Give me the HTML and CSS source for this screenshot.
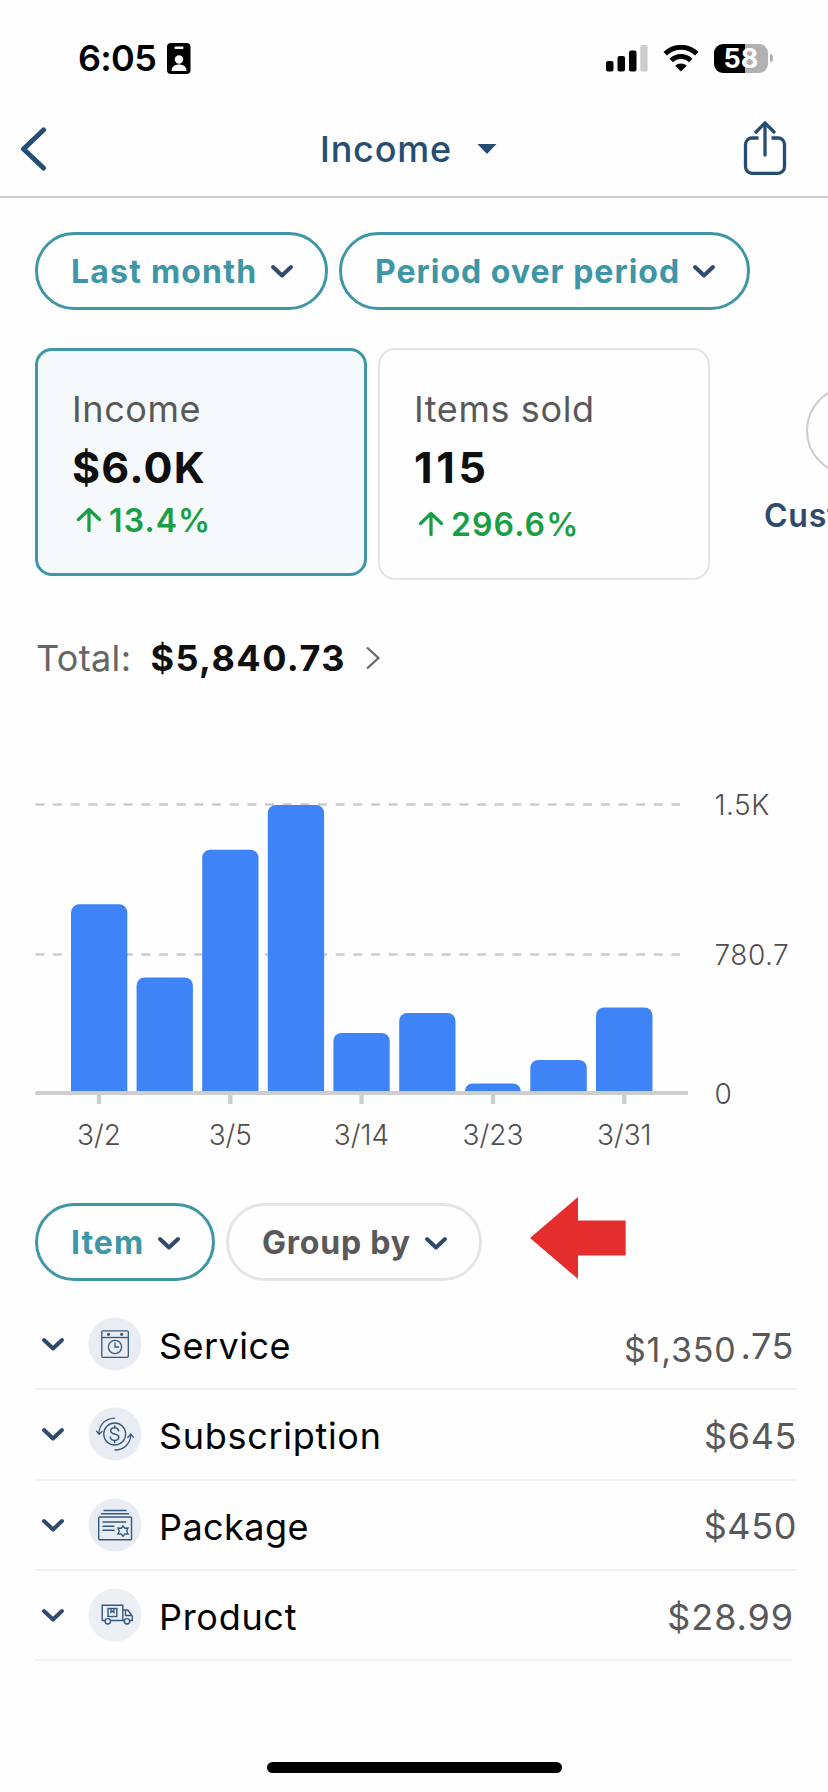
FILE: index.html
```html
<!DOCTYPE html>
<html lang="en">
<head>
<meta charset="utf-8">
<title>Income</title>
<link rel="stylesheet" href="styles.css">
</head>
<body>
<svg class="defs" width="0" height="0" aria-hidden="true">
  <symbol id="chevron" viewBox="0 0 24 16"><path d="M3 4l9 8.500l9-8.500" fill="none" stroke="#2f4a6d" stroke-width="4" stroke-linecap="round" stroke-linejoin="round"/></symbol>
  <symbol id="up" viewBox="0 0 26 26"><path d="M13 23.500V3M2.500 12.500L13 2.500L23.500 12.500" fill="none" stroke="#1a9e45" stroke-width="3.300" stroke-linecap="round" stroke-linejoin="round"/></symbol>
</svg>
<div class="screen">
  <div class="status">
    <span class="time">6:05</span>
    <svg class="badge" width="24" height="31" viewBox="0 0 24 31"><rect width="23.500" height="31" rx="4" fill="#000"/><rect x="7.500" y="3.500" width="9" height="2.600" rx="1" fill="#fff"/><circle cx="12" cy="16.500" r="4.200" fill="#fff"/><path d="M4.500 28c0-4.500 3.500-6.500 7.500-6.500s7.500 2 7.500 6.500z" fill="#fff"/></svg>
    <svg class="signal" width="42" height="27" viewBox="0 0 42 27"><rect x="0" y="16" width="7.500" height="10.500" rx="2"/><rect x="11.500" y="11" width="7.500" height="15.500" rx="2"/><rect x="23" y="5.500" width="7.500" height="21" rx="2"/><rect x="34.300" y="0" width="7.300" height="26.500" rx="2" fill="#ccc"/></svg>
    <svg class="wifi" width="36" height="27" viewBox="0 0 36 27"><g fill="none" stroke="#000" stroke-width="5"><path d="M2.200 8.800a22.500 22.500 0 0 1 31.600 0"/><path d="M8.300 15.500a14 14 0 0 1 19.400 0"/></g><path d="M18 26.500l-5.800-5.700a8.200 8.200 0 0 1 11.600 0z"/></svg>
    <div class="battery"><span>58</span></div><i class="nub"></i>
  </div>

  <header class="bar">
    <svg width="28" height="44" viewBox="0 0 28 44"><path d="M24.500 3L4.500 22L24.500 41" fill="none" stroke="#264e73" stroke-width="5" stroke-linecap="round" stroke-linejoin="round"/></svg>
    <div class="title">Income <svg width="20" height="10" viewBox="0 0 20 10"><path d="M.5 0h19L10 10z" fill="#264e73"/></svg></div>
    <svg class="share" width="44" height="56" viewBox="0 0 44 56"><g fill="none" stroke="#264e73" stroke-width="3.300" stroke-linecap="round" stroke-linejoin="round"><path d="M15.500 18H9a6.500 6.500 0 0 0-6.500 6.500v22.300a6.500 6.500 0 0 0 6.500 6.500h26a6.500 6.500 0 0 0 6.500-6.500V24.500A6.500 6.500 0 0 0 35 18h-6.500" stroke-linecap="butt"/><path d="M22 35V3M13 12l9-9.200l9 9.200"/></g></svg>
  </header>

  <div class="pills">
    <div class="pill month">Last month <svg width="24" height="16"><use href="#chevron"/></svg></div>
    <div class="pill period">Period over period <svg width="24" height="16"><use href="#chevron"/></svg></div>
  </div>

  <div class="cards">
    <div class="card active">
      <div class="label">Income</div>
      <div class="value">$6.0K</div>
      <div class="delta"><svg width="26" height="26"><use href="#up"/></svg>13.4%</div>
    </div>
    <div class="card">
      <div class="label">Items sold</div>
      <div class="value num">115</div>
      <div class="delta wide"><svg width="26" height="26"><use href="#up"/></svg>296.6%</div>
    </div>
    <div class="custom"><i></i><span>Customize</span></div>
  </div>

  <div class="total"><span>Total:</span><b>$5,840.73</b><svg width="16" height="24" viewBox="0 0 16 24"><path d="M2 1.500L13.500 12L2 22.500" fill="none" stroke="#666" stroke-width="2.200"/></svg></div>

  <svg class="chart" width="828" height="380" viewBox="0 780 828 380">
    <path d="M35.300 804.500H680M35.300 954.500H680" stroke="#ccc" stroke-width="2.400" stroke-dasharray="9 8.670" fill="none"/>
    <g fill="#3e84f7">
      <path d="M71 1092V912.300a8 8 0 0 1 8-8h40.300a8 8 0 0 1 8 8V1092z"/>
      <path d="M136.600 1092V985.500a8 8 0 0 1 8-8h40.300a8 8 0 0 1 8 8V1092z"/>
      <path d="M202.200 1092V857.700a8 8 0 0 1 8-8h40.300a8 8 0 0 1 8 8V1092z"/>
      <path d="M267.800 1092V813a8 8 0 0 1 8-8h40.300a8 8 0 0 1 8 8V1092z"/>
      <path d="M333.400 1092V1041a8 8 0 0 1 8-8h40.300a8 8 0 0 1 8 8V1092z"/>
      <path d="M399.200 1092V1021a8 8 0 0 1 8-8h40.300a8 8 0 0 1 8 8V1092z"/>
      <path d="M465 1092c0-5 3-8.400 8-8.400h39.500c5 0 8.300 3.400 8.300 8.400z"/>
      <path d="M530.300 1092V1068a8 8 0 0 1 8-8h40.500a8 8 0 0 1 8 8V1092z"/>
      <path d="M596 1092V1015.500a8 8 0 0 1 8-8h40.500a8 8 0 0 1 8 8V1092z"/>
    </g>
    <path d="M35.300 1093H688" stroke="#cecece" stroke-width="4"/>
    <path d="M99 1093v11M230.300 1093v11M361.500 1093v11M493 1093v11M624.300 1093v11" stroke="#cecece" stroke-width="4.400"/>
    <g class="axis" text-anchor="middle">
      <text x="99" y="1145">3/2</text><text x="230.300" y="1145">3/5</text><text x="361.500" y="1145">3/14</text><text x="493" y="1145">3/23</text><text x="624.300" y="1145">3/31</text>
    </g>
    <g class="axis scale"><text x="714.500" y="815">1.5K</text><text x="714.500" y="965">780.7</text><text x="714.500" y="1104">0</text></g>
  </svg>

  <div class="pills group">
    <div class="pill item">Item <svg width="24" height="16"><use href="#chevron"/></svg></div>
    <div class="pill grey">Group by <svg width="24" height="16"><use href="#chevron"/></svg></div>
    <svg class="pointer" width="96" height="82" viewBox="0 0 96 82"><path d="M0 41L48 0v23.500h47.700V58.500H48V82z" fill="#e42e2e"/></svg>
  </div>

  <div class="rows">
    <div class="row">
      <svg width="24" height="16"><use href="#chevron"/></svg>
      <svg class="icon" width="54" height="54" viewBox="0 0 54 54"><circle cx="27" cy="27" r="26.500" fill="#e9edf3"/><g fill="none" stroke="#34597f" stroke-width="1.300"><rect x="13.800" y="13.800" width="26.500" height="26.500" rx="1"/><path d="M14 20.500h26"/><circle cx="27" cy="30" r="6.600"/><path d="M27 25.500v4.500h4"/></g><circle cx="20.500" cy="17.300" r="1.600" fill="#34597f"/><circle cx="33.700" cy="17.300" r="1.600" fill="#34597f"/></svg>
      <span class="name">Service</span><span class="amount cents"><small>$1,350</small>.75</span>
    </div>
    <div class="row">
      <svg width="24" height="16"><use href="#chevron"/></svg>
      <svg class="icon" width="54" height="54" viewBox="0 0 54 54"><circle cx="27" cy="27" r="26.500" fill="#e9edf3"/><g fill="none" stroke="#34597f" stroke-width="1.300" stroke-linecap="round"><circle cx="26.700" cy="27" r="11"/><path d="M26.500 11.200C17.500 11.500 11 17.500 11 27M8.500 24.200l2.600 3.200l3-3M27 43c9 0 15.500-6.500 15.800-15M39.800 30.500l3-3.500l2.700 3.300"/><path d="M30.600 23.800c-.3-2-1.800-3-4-3s-3.900 1.100-3.900 3.100c0 4.300 8.100 1.800 8.100 6.200 0 2.100-1.700 3.300-4.200 3.300s-4-1.200-4.300-3.400M26.700 18.800v2M26.700 33.400v2" stroke-width="1.500"/></g></svg>
      <span class="name long">Subscription</span><span class="amount">$645</span>
    </div>
    <div class="row">
      <svg width="24" height="16"><use href="#chevron"/></svg>
      <svg class="icon" width="54" height="54" viewBox="0 0 54 54"><circle cx="27" cy="27" r="26.500" fill="#e9edf3"/><g fill="none" stroke="#34597f" stroke-width="1.400"><rect x="10.700" y="19" width="32.800" height="22.700" rx="1"/><path d="M15.500 12.500h23M13 15.800h28M14.500 24h23.500M14.500 28.200h12M14.500 32.200h12"/><path d="M35 28l1.800 2.300l3.200-.2l-1.200 3l1.200 3l-3.200-.2L35 38.300l-1.800-2.400l-3.200.2l1.200-3l-1.200-3l3.200.2z"/></g></svg>
      <span class="name">Package</span><span class="amount">$450</span>
    </div>
    <div class="row last">
      <svg width="24" height="16"><use href="#chevron"/></svg>
      <svg class="icon" width="54" height="54" viewBox="0 0 54 54"><circle cx="27" cy="27" r="26.500" fill="#ecf0f4"/><g fill="none" stroke="#34597f" stroke-width="1.400"><path d="M17 32.500h-2.800V17.300h20.600v15.200H22.500M34.800 22h5l4.500 6.200v4.300h-3.200M36.600 32.500h-1.800M37.500 22v5.500h6"/><rect x="20" y="20.500" width="8.800" height="8"/><path d="M23 20.500v3.800l1.400-1.200l1.500 1.200v-3.800"/><circle cx="19.800" cy="33.300" r="2.700"/><circle cx="39" cy="33.300" r="2.700"/></g></svg>
      <span class="name long">Product</span><span class="amount dec">$28.99</span>
    </div>
  </div>
  <div class="home"></div>
</div>
</body>
</html>
```
FILE: styles.css
```css
* { box-sizing: border-box; }
body { margin: 0; background: #fefefe; font-family: Inter, "Liberation Sans", sans-serif; }
.defs { position: absolute; }
.screen { width: 828px; height: 1792px; overflow: hidden; display: flex; flex-direction: column; }
.screen > * { flex: none; }
svg { display: block; flex: none; }

.status { height: 102px; padding: 14px 0 0 78px; display: flex; align-items: center; }
.time { font-size: 36px; font-weight: 600; width: 89px; letter-spacing: -.7px; }
.signal { margin-left: 415px; }
.wifi { margin-left: 15px; }
.battery { margin-left: 15px; width: 54px; height: 29px; border-radius: 9px; background: linear-gradient(90deg, #000 31px, #b1b1b1 31px); color: #fff; font-size: 27px; font-weight: 700; line-height: 30px; text-align: center; }
.nub { width: 3px; height: 8px; margin-left: 2px; border-radius: 0 3px 3px 0; background: #b1b1b1; }

.bar { height: 96px; border-bottom: 2px solid #ccc; padding: 0 41px 0 19px; display: flex; align-items: center; justify-content: space-between; }
.title { display: flex; align-items: center; gap: 25px; padding-left: 27px; font-size: 36px; font-weight: 500; letter-spacing: .8px; color: #264e73; }
.share { margin-top: -3px; }

.pills { display: flex; gap: 11px; margin: 34px 0 0 35px; }
.pill { height: 78px; border: 3px solid #3f96a6; border-radius: 39px; padding: 0 0 0 33px; display: flex; align-items: center; font-size: 32px; font-weight: 700; letter-spacing: 1px; color: #3f96a6; white-space: nowrap; }
.pill svg { margin-left: auto; margin-right: 31px; }
.month { width: 293px; letter-spacing: 1.2px; }
.period { width: 411px; }
.group { margin-top: 43px; height: 77px; }
.item { width: 180px; }
.grey { width: 256px; border-color: #e5e5e5; color: #595959; letter-spacing: .8px; }
.group .pill { padding-top: 1px; }
.pointer { margin: -6px 0 0 37px; }

.cards { display: flex; align-items: flex-start; margin: 38px 0 0 35px; height: 232px; }
.card { width: 332px; height: 232px; border: 2px solid #e5e5e5; border-radius: 17px; padding: 39px 0 0 34px; margin-right: 11px; flex: none; }
.card.active { height: 228px; border: 3px solid #3f96a6; background: #f5f9fb; padding: 38px 0 0 34px; }
.label { font-size: 36px; line-height: 40px; color: #595959; letter-spacing: .6px; }
.value { font-size: 43px; line-height: 50px; margin-top: 13px; font-weight: 700; color: #0f0f0f; letter-spacing: 1.200px; }
.value.num { letter-spacing: 3.700px; }
.delta { display: flex; align-items: center; gap: 7px; margin: 10px 0 0 4px; height: 36px; font-size: 32px; font-weight: 600; letter-spacing: 1.1px; color: #1a9e45; }
.delta.wide { margin-top: 14px; }
.custom { width: 180px; margin-left: 39px; flex: none; padding-top: 38px; text-align: center; font-size: 32px; font-weight: 600; letter-spacing: .8px; color: #2f4a6d; }
.custom i { display: block; width: 89px; height: 89px; margin: 0 auto 22px; border: 2px solid #ccc; border-radius: 50%; }
.custom span { display: block; line-height: 38px; }

.total { margin: 58px 0 0 36px; height: 40px; display: flex; align-items: center; font-size: 36px; letter-spacing: .35px; color: #666; }
.total b { margin-left: 19px; color: #0f0f0f; letter-spacing: 1.450px; }
.total svg { margin-left: 19px; }
.chart { margin-top: 102px; }
.axis { font-size: 28px; font-weight: 300; fill: #4f4f4f; }
.scale { letter-spacing: .5px; }

.rows { margin: 20px 0 0 35px; }
.row { width: 762px; height: 90.300px; border-bottom: 2px solid #f2f2f2; display: flex; align-items: center; padding: 0 0 0 6px; }
.row.last { width: 757px; }
.icon { margin-left: 23px; }
.name { margin-left: 17px; padding-top: 4px; font-size: 36px; letter-spacing: .45px; color: #000; }
.name.long { letter-spacing: .7px; }
.amount { margin-left: auto; padding-top: 3px; font-size: 36px; letter-spacing: .6px; color: #595959; }
.dec { letter-spacing: .9px; margin-right: -2px; }
.cents { padding-right: 3px; }
.amount small { display: inline-block; font-size: 34px; letter-spacing: .8px; margin-right: 4px; transform: translateY(3px); }

.home { width: 295px; height: 11px; border-radius: 6px; background: #000; margin: 101px 0 0 267px; }
```
